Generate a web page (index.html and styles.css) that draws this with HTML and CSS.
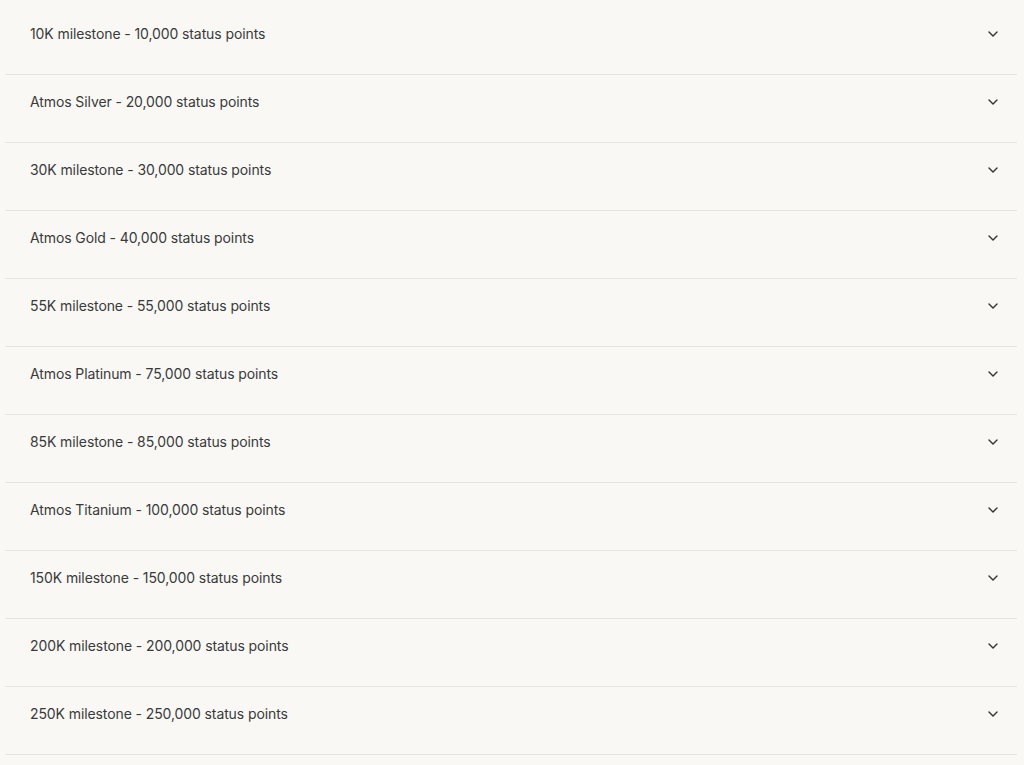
FILE: index.html
```html
<!DOCTYPE html>
<html>
<head>
<meta charset="utf-8">
<link rel="stylesheet" href="styles.css">
</head>
<body>
<div class="list">
  <div class="item"><span class="label">10K milestone - 10,000 status points</span><svg class="chev" viewBox="0 0 10 6"><path d="M1 1l4 4 4-4"/></svg></div>
  <div class="item"><span class="label">Atmos Silver - 20,000 status points</span><svg class="chev" viewBox="0 0 10 6"><path d="M1 1l4 4 4-4"/></svg></div>
  <div class="item"><span class="label">30K milestone - 30,000 status points</span><svg class="chev" viewBox="0 0 10 6"><path d="M1 1l4 4 4-4"/></svg></div>
  <div class="item"><span class="label">Atmos Gold - 40,000 status points</span><svg class="chev" viewBox="0 0 10 6"><path d="M1 1l4 4 4-4"/></svg></div>
  <div class="item"><span class="label">55K milestone - 55,000 status points</span><svg class="chev" viewBox="0 0 10 6"><path d="M1 1l4 4 4-4"/></svg></div>
  <div class="item"><span class="label">Atmos Platinum - 75,000 status points</span><svg class="chev" viewBox="0 0 10 6"><path d="M1 1l4 4 4-4"/></svg></div>
  <div class="item"><span class="label">85K milestone - 85,000 status points</span><svg class="chev" viewBox="0 0 10 6"><path d="M1 1l4 4 4-4"/></svg></div>
  <div class="item"><span class="label">Atmos Titanium - 100,000 status points</span><svg class="chev" viewBox="0 0 10 6"><path d="M1 1l4 4 4-4"/></svg></div>
  <div class="item"><span class="label">150K milestone - 150,000 status points</span><svg class="chev" viewBox="0 0 10 6"><path d="M1 1l4 4 4-4"/></svg></div>
  <div class="item"><span class="label">200K milestone - 200,000 status points</span><svg class="chev" viewBox="0 0 10 6"><path d="M1 1l4 4 4-4"/></svg></div>
  <div class="item"><span class="label">250K milestone - 250,000 status points</span><svg class="chev" viewBox="0 0 10 6"><path d="M1 1l4 4 4-4"/></svg></div>
</div>
</body>
</html>
```
FILE: styles.css
```css
html, body {
  margin: 0;
  padding: 0;
  background: #f9f8f5;
}
body {
  font-family: Inter, "Liberation Sans", sans-serif;
  color: #3a3a3a;
}
.list {
  display: flex;
  flex-direction: column;
  margin: 7px 7px 0 5px;
}
.item {
  display: flex;
  justify-content: space-between;
  align-items: flex-start;
  height: 67px;
  box-sizing: content-box;
  padding: 0 19px 0 25px;
  border-bottom: 1px solid #e7e5e0;
}
.label {
  font-size: 14px;
  line-height: 20px;
  margin-top: 17px;
  letter-spacing: -0.1px;
}
.chev {
  width: 10px;
  height: 6px;
  margin-top: 24px;
  fill: none;
  stroke: #333;
  stroke-width: 1.4;
  stroke-linecap: round;
  stroke-linejoin: round;
}
```
